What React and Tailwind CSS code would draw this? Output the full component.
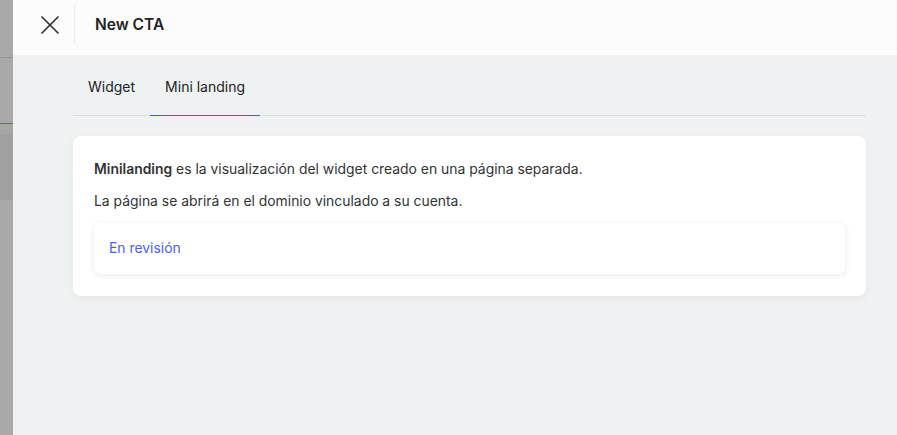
import { X } from "lucide-react";

const Backdrop = () => (
  <div className="w-[13px] shrink-0 flex flex-col bg-[#a9a9a9]">
    <div className="h-[58px] border-b border-[#959595]" />
    <div className="h-[66px] border-b border-[#5a64b0]" />
    <div className="h-[10px] bg-[#a6a6a6]" />
    <div className="h-[66px] bg-[#a0a0a0]" />
    <div className="flex-1 bg-[#a9a9a9]" />
  </div>
);

const App = () => {
  return (
    <div
      className="flex h-[435px] w-[897px] overflow-hidden"
      style={{ fontFamily: "Inter, 'Noto Sans', sans-serif" }}
    >
      <Backdrop />

      <div className="flex-1 flex flex-col bg-[#eff2f3]">
        {/* Header */}
        <div className="h-[55px] shrink-0 flex items-center bg-[#fcfcfc] pb-[5px]">
          <button className="w-[61px] h-full flex items-center justify-center pl-[12px] text-[#333]">
            <X className="w-[32px] h-[32px]" strokeWidth={1.3} />
          </button>
          <div className="w-px h-[40px] bg-[#ececec]" />
          <h3 className="ml-[20px] text-[15.5px] font-semibold text-[#222]">New CTA</h3>
        </div>

        {/* Content */}
        <div className="pl-[60px] pr-[31px]">
          <div className="flex border-b border-[#dcdfe1] h-[61px] pt-[3px]">
            <div className="px-[15px] flex items-center text-[14px] text-[#222]">Widget</div>
            <div className="px-[15px] flex items-center text-[14px] text-[#222] border-b border-[#3d5fd9] -mb-px">
              Mini landing
            </div>
          </div>

          <div className="mt-[20px] bg-white rounded-[8px] shadow-[0_2px_8px_rgba(0,0,0,0.05)] px-[21px] pt-[23px] pb-[22px]">
            <p className="text-[13.9px] leading-[20px] text-[#333]">
              <span className="font-semibold">Minilanding</span> es la visualización del widget creado en una página separada.
            </p>
            <p className="mt-[12px] text-[13.9px] leading-[20px] text-[#333]">
              La página se abrirá en el dominio vinculado a su cuenta.
            </p>
            <div className="mt-[12px] h-[51px] flex items-center px-[15px] rounded-[6px] bg-white shadow-[0_1px_6px_rgba(0,0,0,0.09)]">
              <span className="text-[13.9px] text-[#4b5ef5]">En revisión</span>
            </div>
          </div>
        </div>
      </div>
    </div>
  );
};

export default App;
